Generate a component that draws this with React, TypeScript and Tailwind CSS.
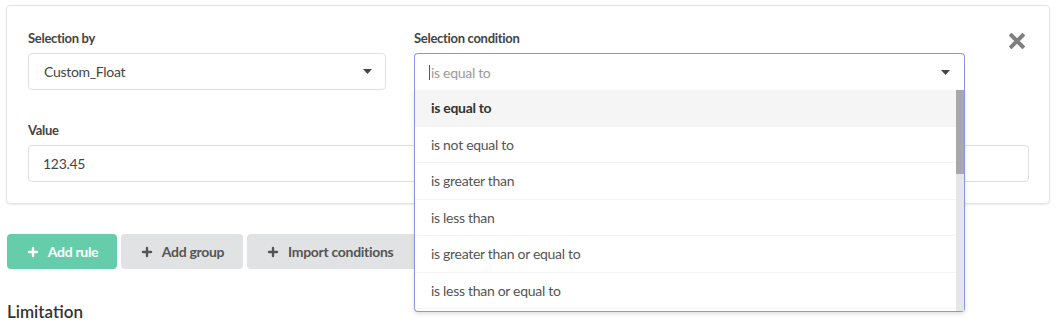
import { Plus } from "lucide-react";

const options = [
  "is equal to",
  "is not equal to",
  "is greater than",
  "is less than",
  "is greater than or equal to",
  "is less than or equal to",
];

const Caret = () => (
  <svg width="9" height="5" viewBox="0 0 9 5" className="shrink-0">
    <path d="M0 0h9L4.5 5z" fill="#444" />
  </svg>
);

const CloseIcon = () => (
  <svg width="16" height="16" viewBox="0 0 16 16">
    <path d="M2.5 2.5L13.5 13.5M13.5 2.5L2.5 13.5" stroke="#7f7f7f" strokeWidth="4" strokeLinecap="square" />
  </svg>
);

export default function App() {
  return (
    <div className="min-h-[329px] bg-white px-[6px] pt-[5px] tracking-[-0.3px] text-[#444]" style={{ fontFamily: "Lato, 'Liberation Sans', sans-serif" }}>
      {/* Rule card */}
      <div className="w-[1044px] rounded-[4px] border border-[#e3e3e3] shadow-[0_1px_2px_rgba(0,0,0,0.08)] pl-[21px] pr-[20px] pt-[24px] pb-[21px]">
        <div className="flex">
          <div className="w-[358px]">
            <p className="text-[13px] font-bold leading-[16px] text-[#444]">Selection by</p>
            <div className="mt-[7px] flex h-[37px] items-center justify-between rounded-[4px] border border-[#e0e0e0] pl-[15px] pr-[13px] text-[14px] text-[#444]">
              <span>Custom_Float</span>
              <Caret />
            </div>
          </div>

          <div className="relative ml-[28px] w-[551px]">
            <p className="text-[13px] font-bold leading-[16px] text-[#444]">Selection condition</p>
            <div className="mt-[7px] flex h-[37px] items-center justify-between rounded-t-[4px] border border-b-0 border-[#8a96e4] pl-[14px] pr-[14px] text-[14px]">
              <span className="flex items-center text-[#9a9a9a]">
                <span className="mr-[1px] inline-block h-[15px] w-px bg-[#555]" />
                is equal to
              </span>
              <Caret />
            </div>
            {/* Open dropdown menu */}
            <div className="absolute left-0 top-[60px] z-10 flex h-[222px] w-[551px] rounded-b-[4px] border border-t-0 border-[#8a96e4] bg-white shadow-[0_2px_4px_rgba(0,0,0,0.12)]">
              <div className="flex-1">
                {options.map((o, i) => (
                  <div
                    key={o}
                    className={`flex h-[36.5px] items-center border-b border-[#f4f4f4] pl-[16px] text-[14px] ${
                      i === 0 ? "bg-[#f5f5f5] font-bold text-[#333]" : "text-[#555]"
                    }`}
                  >
                    {o}
                  </div>
                ))}
              </div>
              <div className="w-[8px] bg-[#e6e6e6]">
                <div className="h-[84px] w-[8px] bg-[#a8a8a8]" />
              </div>
            </div>
          </div>

          <div className="ml-auto pt-[3px] pr-[4px]">
            <CloseIcon />
          </div>
        </div>

        <p className="mt-[32px] text-[13px] font-bold leading-[16px] text-[#444]">Value</p>
        <div className="mt-[7px] flex h-[37px] w-[1001px] items-center rounded-[4px] border border-[#e0e0e0] pl-[14px] text-[14px] text-[#444]">
          123.45
        </div>
      </div>

      {/* Action buttons */}
      <div className="mt-[30px] flex gap-[4px] pl-px">
        <button className="flex h-[35px] w-[110px] items-center justify-center gap-[8px] rounded-[4px] bg-[#66cdaa] text-[14px] font-bold text-white">
          <Plus size={14} strokeWidth={4} />
          Add rule
        </button>
        <button className="flex h-[35px] w-[122px] items-center justify-center gap-[8px] rounded-[4px] bg-[#e1e2e4] text-[14px] font-bold text-[#555]">
          <Plus size={14} strokeWidth={4} />
          Add group
        </button>
        <button className="flex h-[35px] w-[175px] items-center gap-[8px] rounded-[4px] bg-[#e1e2e4] pl-[19px] text-[14px] font-bold text-[#555]">
          <Plus size={14} strokeWidth={4} />
          Import conditions
        </button>
      </div>

      <h2 className="mt-[33px] pl-px text-[17px] font-semibold leading-[20px] tracking-normal text-[#333]">Limitation</h2>
    </div>
  );
}
